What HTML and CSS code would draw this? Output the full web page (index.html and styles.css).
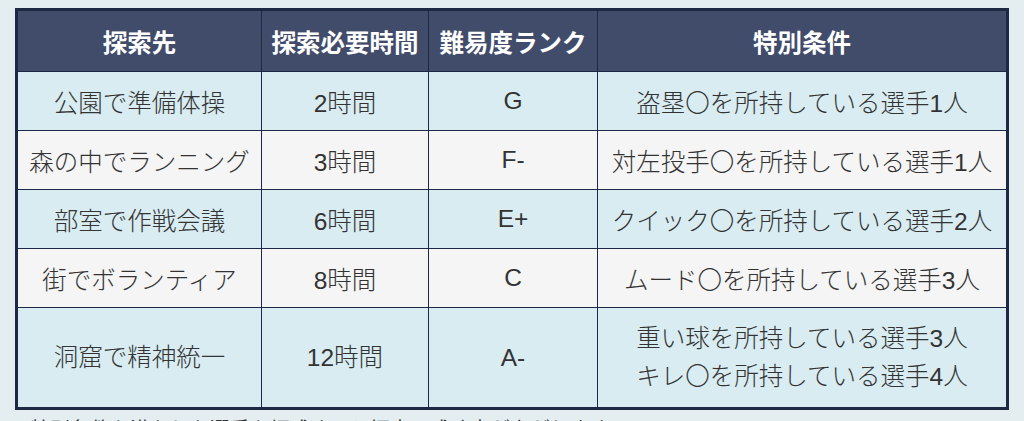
FILE: index.html
```html
<!DOCTYPE html>
<html lang="ja">
<head>
<meta charset="utf-8">
<link rel="stylesheet" href="styles.css">
</head>
<body>
<div class="wrap">
<table class="tbl">
  <colgroup>
    <col class="c1"><col class="c2"><col class="c3"><col class="c4">
  </colgroup>
  <thead>
    <tr><th>探索先</th><th>探索必要時間</th><th>難易度ランク</th><th>特別条件</th></tr>
  </thead>
  <tbody>
    <tr class="odd"><td>公園で準備体操</td><td>2時間</td><td>G</td><td>盗塁〇を所持している選手1人</td></tr>
    <tr class="even"><td>森の中でランニング</td><td>3時間</td><td>F-</td><td>対左投手〇を所持している選手1人</td></tr>
    <tr class="odd"><td>部室で作戦会議</td><td>6時間</td><td>E+</td><td>クイック〇を所持している選手2人</td></tr>
    <tr class="even"><td>街でボランティア</td><td>8時間</td><td>C</td><td>ムード〇を所持している選手3人</td></tr>
    <tr class="odd tall"><td>洞窟で精神統一</td><td>12時間</td><td>A-</td><td>重い球を所持している選手3人<br>キレ〇を所持している選手4人</td></tr>
  </tbody>
</table>
<p class="note">特別条件を満たした選手を編成すると探索の成功率が上がります。</p>
</div>
</body>
</html>
```
FILE: styles.css
```css
html, body {
  margin: 0;
  padding: 0;
  background: #e4eef1;
  overflow: hidden;
}
body {
  font-family: "Liberation Sans", "Noto Sans CJK JP", sans-serif;
  color: #333;
}
.wrap {
  padding: 8px 18px 0 15px;
}
.tbl {
  width: 991px;
  border-collapse: collapse;
  table-layout: fixed;
  border: 3px solid #1d2844;
}
.c1 { width: 245px; }
.c2 { width: 167px; }
.c3 { width: 169px; }
.c4 { width: 410px; }
.tbl th, .tbl td {
  border: 1px solid #1d2844;
  text-align: center;
  vertical-align: middle;
  padding: 0;
  font-size: 24.5px;
  white-space: nowrap;
}
.tbl th {
  background: #414c6b;
  color: #fff;
  font-weight: 700;
  height: 60px;
}
.tbl td {
  height: 58px;
  font-weight: 300;
  color: #333;
}
.tbl tr.odd td { background: #d8ecf2; }
.tbl tr.even td { background: #f5f5f5; }
.tbl tr.tall td { height: 99px; line-height: 38px; }
.note {
  margin: 4px 0 0 15px;
  font-size: 20px;
  color: #333;
  white-space: nowrap;
}
```
